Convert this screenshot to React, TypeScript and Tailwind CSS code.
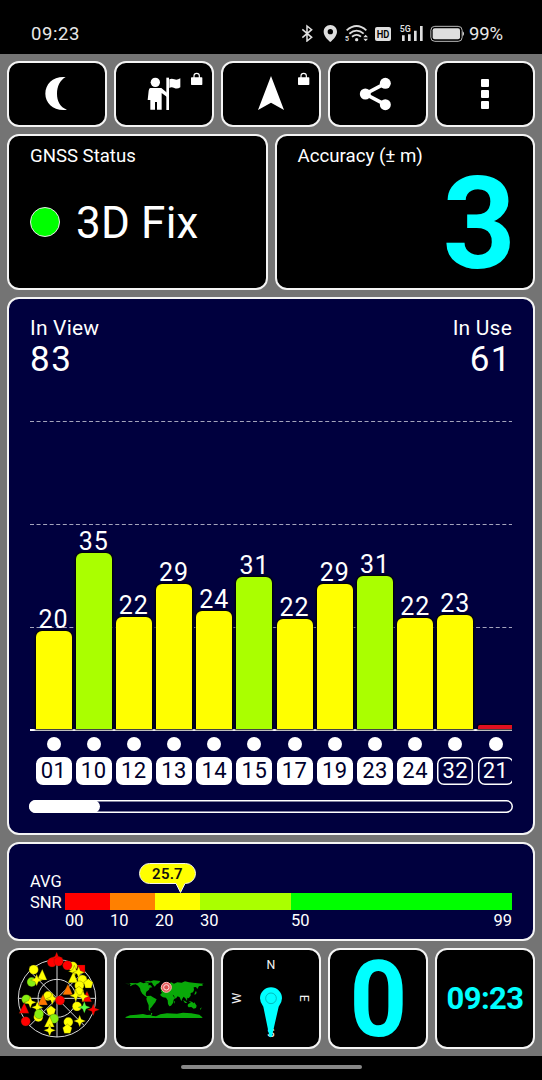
import React from 'react';

type Satellite = {
  id: string;
  snr: number | null;
  height: number;
  color: string;
  inUse: boolean;
};

const satellites: Satellite[] = [
  { id: '01', snr: 20, height: 98, color: 'bg-[#ffff00]', inUse: true },
  { id: '10', snr: 35, height: 176, color: 'bg-[#aaff00]', inUse: true },
  { id: '12', snr: 22, height: 112, color: 'bg-[#ffff00]', inUse: true },
  { id: '13', snr: 29, height: 145, color: 'bg-[#ffff00]', inUse: true },
  { id: '14', snr: 24, height: 118.5, color: 'bg-[#ffff00]', inUse: true },
  { id: '15', snr: 31, height: 152, color: 'bg-[#aaff00]', inUse: true },
  { id: '17', snr: 22, height: 110, color: 'bg-[#ffff00]', inUse: true },
  { id: '19', snr: 29, height: 145, color: 'bg-[#ffff00]', inUse: true },
  { id: '23', snr: 31, height: 153, color: 'bg-[#aaff00]', inUse: true },
  { id: '24', snr: 22, height: 111, color: 'bg-[#ffff00]', inUse: true },
  { id: '32', snr: 23, height: 114, color: 'bg-[#ffff00]', inUse: false },
  { id: '21', snr: null, height: 4, color: 'bg-[#e01020]', inUse: false },
];

const snrScale = [
  { label: '00', width: 'w-[45px]', color: 'bg-[#ff0000]' },
  { label: '10', width: 'w-[45px]', color: 'bg-[#ff8000]' },
  { label: '20', width: 'w-[45px]', color: 'bg-[#ffff00]' },
  { label: '30', width: 'w-[91px]', color: 'bg-[#aaff00]' },
  { label: '50', width: 'flex-1', color: 'bg-[#00ff00]' },
];

const Panel = ({ className = '', children }: { className?: string; children: React.ReactNode }) => (
  <div className={`rounded-xl border-2 border-[#f4f4f4] ${className}`}>{children}</div>
);

const Lock = ({ x }: { x: number }) => (
  <g transform={`translate(${x} 218)`}>
    <path d="M9 17V9a8 7 0 0 1 16 0v8" fill="none" stroke="#fff" strokeWidth="3.5" />
    <rect x="0" y="14" width="34" height="23" rx="2" fill="#fff" />
  </g>
);

const StatusBar = () => (
  <header className="flex h-[54px] items-start bg-black pt-6 pl-[31px] text-[#e8e8e8]">
    <span className="w-[270px] pt-px text-[18.500px] leading-[18px] tracking-[0.6px]">09:23</span>
    <svg className="h-[18px] w-3" viewBox="90 72 36 54" fill="none" stroke="#e0e0e0" strokeWidth="4.5">
      <path d="M94 88l28 24-14 11V78l14 11-28 24" />
    </svg>
    <svg className="ml-2.5 h-[18px] w-[15px]" viewBox="156 72 45 54">
      <path fillRule="evenodd" fill="#dedede" d="M178 75c-12 0-20 9-20 20 0 13 12 24 20 31 8-7 20-18 20-31 0-11-8-20-20-20zm0 12a8 8 0 1 1 0 16 8 8 0 0 1 0-16z" />
    </svg>
    <svg className="ml-1.5 h-[18px] w-[25px]" viewBox="219 72 75 54" fill="none" stroke="#dcdcdc" strokeWidth="5.5">
      <path d="M227 91q30-26 59 0M235 101q22-18 43 0M243 110q14-11 27 0" />
      <circle cx="257" cy="119" r="5" fill="#dcdcdc" stroke="none" />
      <path d="M284 104l7 8h-14zM284 124l7-8h-14z" fill="#dcdcdc" stroke="none" />
      <text x="222" y="123" fontSize="21" fontWeight="700" fill="#dcdcdc" stroke="none">5</text>
    </svg>
    <svg className="ml-[5px] h-[18px] w-[18px]" viewBox="309 72 54 54">
      <rect x="312" y="81" width="48" height="42" rx="6" fill="#dedede" />
      <text x="336" y="114" textAnchor="middle" fontSize="34" fontWeight="600" fill="#000" textLength="38" lengthAdjust="spacingAndGlyphs">HD</text>
    </svg>
    <svg className="ml-[7px] h-[18px] w-6" viewBox="384 72 72 54" fill="#dedede">
      <text x="386" y="97" fontSize="29" fontWeight="600" textLength="33" lengthAdjust="spacingAndGlyphs">5G</text>
      <path d="M393 106h8v17h-8zM411 103h8v20h-8zM429 92h8v31h-8zM447 78h8v45h-8z" />
    </svg>
    <svg className="ml-[7px] h-[18px] w-[34px]" viewBox="477 72 102 54">
      <rect x="479.500" y="79" width="94" height="45" rx="12" fill="none" stroke="#b8b8b8" strokeWidth="3" />
      <rect x="485" y="85" width="82" height="33" rx="6" fill="#dedede" />
      <path d="M575 94q4 2 4 7t-4 7z" fill="#dedede" />
    </svg>
    <span className="ml-[5px] pt-px text-[18.500px] leading-[18px] tracking-[-0.1px]">99%</span>
  </header>
);

const Toolbar = () => (
  <nav className="grid h-[66px] grid-cols-5 gap-[7px]">
    <Panel className="bg-black">
      <svg className="h-full w-full" viewBox="27 189 288 186">
        <path fill="#fff" d="M197 231C160 228 136 251 136 281s26 53 65 48c-21-8-30-26-30-48s9-40 26-50z" />
      </svg>
    </Panel>
    <Panel className="bg-black">
      <svg className="h-full w-full" viewBox="348 189 288 186" fill="#fff">
        <circle cx="466" cy="247" r="14" />
        <path d="M451 264h33l17 14v13l-16-12v50h-14v-23h-6v23h-14v-29h-8l3-28q1-8 5-8z" />
        <path d="M499 233h8v97h-8z" />
        <path d="M508 238q7-4 15 0t18-3v27q-9 6-18 2t-15 0z" />
        <Lock x={573} />
      </svg>
    </Panel>
    <Panel className="bg-black">
      <svg className="h-full w-full" viewBox="669 189 288 186">
        <path fill="#fff" d="M813 228l39 102-39-22-39 22z" />
        <Lock x={894} />
      </svg>
    </Panel>
    <Panel className="bg-black">
      <svg className="h-full w-full" viewBox="177 189 288 186" fill="#fff">
        <path d="M343 250l-60 32 60 32" fill="none" stroke="#fff" strokeWidth="11" />
        <circle cx="343" cy="250" r="16.500" />
        <circle cx="283" cy="282" r="16.500" />
        <circle cx="343" cy="314" r="16.500" />
      </svg>
    </Panel>
    <Panel className="bg-black">
      <svg className="h-full w-full" viewBox="498 189 288 186" fill="#fff">
        <rect x="630" y="237" width="24" height="24" rx="3" />
        <rect x="630" y="270" width="24" height="24" rx="3" />
        <rect x="630" y="303" width="24" height="24" rx="3" />
      </svg>
    </Panel>
  </nav>
);

const SatelliteChart = () => (
  <Panel className="h-[538px] bg-[#00003e] px-[21px] pt-[17px]">
    <div className="flex justify-between">
      <div>
        <div className="text-[21px] leading-6 tracking-[0.2px]">In View</div>
        <div className="mt-0.5 text-[35px] leading-[36px] tracking-[1.5px]">83</div>
      </div>
      <div className="text-right">
        <div className="text-[21px] leading-6 tracking-[0.2px]">In Use</div>
        <div className="mt-0.5 text-[35px] leading-[36px] tracking-[1.5px]">61</div>
      </div>
    </div>

    <div className="relative mt-[43px] h-[367px] w-[482px] overflow-hidden">
      {/* Grid lines behind the bars */}
      <svg className="absolute inset-0 h-full w-full" viewBox="0 0 482 367">
        <path d="M0 .5H482M0 103.500H482M0 206.500H482" stroke="#a4a4bc" strokeWidth="1" strokeDasharray="4 2.560" />
      </svg>
      <div className="relative flex h-[310px] w-[490px] items-end gap-[4.200px] border-b-2 border-white pl-[5.500px]">
        {satellites.map((sat) => (
          <div key={sat.id} className="w-9 shrink-0">
            <div className="-mb-px text-center text-[25px] leading-[24px] tracking-[1px]">{sat.snr}</div>
            <div
              className={`shadow-[0_0_2px_1px_#000000] ${sat.snr === null ? 'rounded-t-xs' : 'rounded-t-md'} ${sat.color}`}
              style={{ height: sat.height }}
            ></div>
          </div>
        ))}
      </div>
      <div className="relative flex w-[490px] gap-[4.200px] pt-[6px] pl-[5.500px]">
        {satellites.map((sat) => (
          <div key={sat.id} className="flex w-9 shrink-0 flex-col items-center">
            <div className="h-3.5 w-3.5 rounded-full bg-white"></div>
            <div
              className={`mt-1.5 h-7 w-full rounded-[7px] text-center text-[22px] leading-[28px] tracking-[0.5px] ${
                sat.inUse ? 'bg-white text-[#00002c]' : 'shadow-[inset_0_0_0_1.500px_#ffffff]'
              }`}
            >
              {sat.id}
            </div>
          </div>
        ))}
      </div>
    </div>

    <div className="mt-3 -ml-px h-[13px] w-[484px] rounded-full shadow-[inset_0_0_0_1.500px_#ffffff]">
      <div className="h-full w-[71px] rounded-full bg-white"></div>
    </div>
  </Panel>
);

const SnrPanel = () => (
  <Panel className="relative flex h-[99px] bg-[#00003e] pt-[27px] pl-[21px]">
    <div className="w-[35px] text-[16.500px] leading-[21px]">
      <div>AVG</div>
      <div>SNR</div>
    </div>
    <div className="w-[447px] pt-[22px]">
      <div className="flex h-[17px]">
        {snrScale.map((step) => (
          <div key={step.label} className={`${step.width} ${step.color}`}></div>
        ))}
      </div>
      <div className="flex text-[16.500px] leading-[22px]">
        {snrScale.map((step) => (
          <div key={step.label} className={step.width}>
            {step.label === '50' ? (
              <div className="flex justify-between">
                <span>50</span>
                <span>99</span>
              </div>
            ) : (
              step.label
            )}
          </div>
        ))}
      </div>
    </div>
    {/* Average value marker */}
    <svg className="absolute top-[19px] left-[130px] h-[32px] w-[60px]" viewBox="0 0 60 32">
      <path
        d="M10.500 .5h36a10 10 0 0 1 0 20h-.500l-4.500 9-4.500-9H10.500a10 10 0 0 1 0-20z"
        fill="#ffff00"
        stroke="#f5f5e8"
        strokeWidth="1"
      />
      <text x="28.500" y="15.800" textAnchor="middle" fontSize="15" fontWeight="600" fill="#101010" letterSpacing="0.2">25.7</text>
    </svg>
  </Panel>
);

type Marker = [shape: 'circle' | 'triangle' | 'star' | 'pentagon' | 'square', x: number, y: number, color: string];

const markers: Marker[] = [
  ['star', 170, 54, '#ff0000'], ['circle', 156, 67, '#ff0000'], ['circle', 176, 64, '#ff0000'],
  ['circle', 218, 79, '#ffff00'], ['circle', 202, 76, '#ff0000'], ['square', 243, 87, '#ff0000'],
  ['star', 223, 94, '#ffff00'], ['circle', 101, 89, '#ffff00'], ['triangle', 126, 106, '#ffff00'],
  ['circle', 95, 126, '#88ee11'], ['star', 110, 120, '#ffff00'], ['star', 236, 97, '#ffff00'],
  ['triangle', 219, 114, '#ffff00'], ['circle', 247, 119, '#ffff00'], ['pentagon', 265, 130, '#ffff00'],
  ['circle', 238, 137, '#ffff00'], ['pentagon', 237, 153, '#ffff00'], ['triangle', 203, 150, '#ff7700'],
  ['star', 227, 167, '#ffff00'], ['triangle', 260, 171, '#ff0000'], ['star', 249, 169, '#ffff00'],
  ['circle', 144, 168, '#ffff00'], ['star', 157, 176, '#ffff00'], ['triangle', 128, 181, '#ff7700'],
  ['circle', 180, 181, '#ff0000'], ['circle', 79, 178, '#88ee11'], ['star', 91, 187, '#ffff00'],
  ['triangle', 72, 206, '#ff0000'], ['star', 112, 202, '#ffff00'], ['circle', 115, 231, '#ffff00'],
  ['circle', 117, 222, '#88ee11'], ['pentagon', 153, 211, '#ffff00'], ['circle', 162, 236, '#88ee11'],
  ['circle', 231, 199, '#ffff00'], ['star', 253, 202, '#55ff44'], ['star', 280, 209, '#ff0000'],
  ['circle', 77, 244, '#ff0000'], ['triangle', 148, 247, '#ffff00'], ['star', 149, 271, '#ffff00'],
  ['circle', 205, 246, '#ffff00'], ['pentagon', 202, 266, '#ffff00'], ['star', 239, 243, '#ffff00'],
];

const shapes = {
  circle: 'M-14 0a14 14 0 1 0 28 0a14 14 0 1 0-28 0z',
  triangle: 'M1-18L15 14H-15z',
  star: 'M0-18L5-5 18 0 5 5 0 18-5 5-18 0-5-5z',
  pentagon: 'M0-14L14-3 9 14H-9L-14-3z',
  square: 'M-10-12H12V12H-12z',
};

const SkyPlot = () => (
  <svg className="h-full w-full" viewBox="27 30 288 291">
    <g fill="none" stroke="#d8d8d8" strokeWidth="3">
      <circle cx="171" cy="175" r="116" />
      <circle cx="171" cy="175" r="57" />
      <path d="M55 175h232M171 59v232M89 93l164 164M253 93L89 257" />
    </g>
    {markers.map(([shape, x, y, color], index) => (
      <path key={index} d={shapes[shape]} fill={color} stroke="#333300" strokeWidth="0.8" transform={`translate(${x} ${y})`} />
    ))}
  </svg>
);

const WorldMap = () => (
  <svg className="h-full w-full" viewBox="18 30 288 291">
    <g fill="#09a909">
      <path d="M45 131l12 2 5-4 20 1 9-4 10 4 8-3 8 4-3 5 7-1 6 7-8 1-2 6-8 6-2 8 2 5 6 3 4 4-5-1-9-6-8-7-5-8-2-8-6-8-7-4-8 1-8 5-1-4 4-3z" />
      <path d="M103 125l12-3 10 3-5 3-12-1zM118 125l13-4 20 2-4 6-7 4-6 7-5-6-3-6z" />
      <path d="M112 168l10-1 7 5 11 6-4 9-5 6-6 8-5 5 1 8-5-5 0-13-5-12-2-8z" />
      <path d="M151 163l9-7 13 1 5 3 9 1 3 8 6 5-5 5-2 10-6 8-5 2-4-7-1-11-5-8-9-1-7-5z" />
      <path d="M153 156l2-8 8-2 4-5 8-10 9-4 8 4 10-4 13 1 10-4 12 3 19 2 25 2-5 3 3 3-12 1-5 9-4-6-7 1 1 8-3 7-7 2 0 8-6 8-4-2-1 10-5-8-5-5-4 6-3 8-5-12-6-3-6 7-7-11-12-2-9-4-9 1z" />
      <path d="M219 180l7 4 6 5-7 0zM235 182l10 3 5 5-6-1z" />
      <path d="M234 193l7-5 5-2 4 4 3-3 7 10-2 7-7 2-7-5-8 1-3-4z" />
      <path d="M151 144l4-6 4 8-6 3zM254 160l4-8 2 7-6 7zM270 206l5-4-3 8zM191 185l4-2-2 8z" />
      <path d="M45 232l15-6 20-2 19-2 12 3 12-1 0-5 4 0-3 8 14 2 13-6 20-3 30 1 18-3 25 2 24 4 9 8v2H50z" />
    </g>
    <circle cx="169" cy="142" r="15" fill="#e86060" stroke="#ffb8b8" strokeWidth="3" />
    <circle cx="169" cy="142" r="8" fill="#dd5050" stroke="#ffe0e0" strokeWidth="3" />
  </svg>
);

const Compass = () => (
  <svg className="h-full w-full" viewBox="21 30 288 291">
    <g fill="#f4f4f4" fontSize="37" textAnchor="middle">
      <text x="165" y="87">N</text>
      <text transform="translate(76 175) rotate(-90)" x="0" y="0">W</text>
      <text transform="translate(253 175) rotate(90)" x="0" y="0">E</text>
      <text x="165" y="292">S</text>
    </g>
    <path d="M132 175a33 33 0 1 1 66 0q0 13-10 25l-20 88q-4 8-8 0l-18-88q-10-12-10-25z" fill="#00ffff" />
    <circle cx="165" cy="175" r="16" fill="none" stroke="#009c9c" strokeWidth="2" />
  </svg>
);

const App = () => {
  return (
    <div className="flex h-[1080px] w-[542px] flex-col overflow-hidden bg-black font-['Roboto',sans-serif] text-white">
      <StatusBar />

      <main className="flex flex-1 flex-col gap-[7px] bg-[#747474] p-[7px]">
        <Toolbar />

        <div className="grid h-[156px] grid-cols-2 gap-[7px]">
          <Panel className="bg-black px-[21px] pt-[9px]">
            <div className="text-[18.600px] leading-[22px]">GNSS Status</div>
            <div className="mt-[30px] flex h-[52px] items-center gap-[16px]">
              <div className="-mt-0.5 h-[30px] w-[30px] rounded-full border border-[#e8e8e8] bg-[#00ff00]"></div>
              <div className="text-[44px] leading-[52px] tracking-[0.2px]">3D Fix</div>
            </div>
          </Panel>
          <Panel className="bg-black pt-[9px] pr-[17px] pl-[21px]">
            <div className="text-[18.700px] leading-[22px]">Accuracy (± m)</div>
            <div className="-mt-[7px] text-right text-[128px] leading-[128px] font-bold text-[#00ffff]">3</div>
          </Panel>
        </div>

        <SatelliteChart />
        <SnrPanel />

        <div className="grid h-[101px] grid-cols-5 gap-[7px]">
          <Panel className="h-[101px] bg-black"><SkyPlot /></Panel>
          <Panel className="h-[101px] bg-black"><WorldMap /></Panel>
          <Panel className="h-[101px] bg-black"><Compass /></Panel>
          <Panel className="flex h-[101px] items-center justify-center bg-black">
            <span className="block scale-x-95 pt-0.5 text-[106px] leading-[94px] font-bold text-[#00ffff]">0</span>
          </Panel>
          <Panel className="flex h-[101px] items-center justify-center bg-black">
            <span className="text-[31px] leading-8 font-bold tracking-[-0.6px] text-[#00ffff]">09:23</span>
          </Panel>
        </div>
      </main>

      <footer className="flex h-6 justify-center pt-[9px]">
        <div className="h-1 w-[181px] rounded-full bg-[#888888]"></div>
      </footer>
    </div>
  );
};

export default App;
